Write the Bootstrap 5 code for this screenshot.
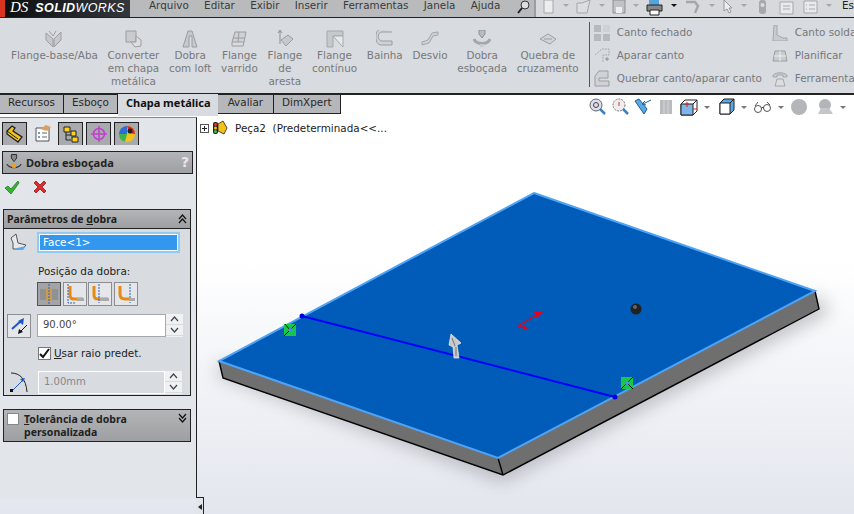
<!DOCTYPE html>
<html lang="pt">
<head>
<meta charset="UTF-8">
<title>SolidWorks - Dobra esboçada</title>
<link rel="stylesheet" href="https://cdn.jsdelivr.net/npm/bootstrap@5.3.3/dist/css/bootstrap.min.css">
<style>
html, body { height: 514px; overflow: hidden; }
body { width: 854px; font-family: "DejaVu Sans", sans-serif; font-size: 10.4px; line-height: 13px; color: #222; background: #fff; }
svg { display: block; flex: none; }
b, .bold-txt { font-family: "Noto Sans", sans-serif; font-weight: 700; font-size: 10.5px; }

.topbar { height: 18px; background: #b9babc; border-bottom: 1px solid #222; overflow: hidden; }
.brand { width: 130px; flex: none; height: 17px; background: linear-gradient(90deg, #0d0e10, #34373c); border-left: 5px solid #d8341e; color: #fff; font-style: italic; font-family: "Liberation Sans", sans-serif; font-size: 12.5px; line-height: 15px; padding-left: 5px; white-space: nowrap; }
.brand-ds { font-family: "Liberation Serif", serif; font-size: 15px; margin-right: 7px; }
.brand-solid { font-family: "Liberation Sans", sans-serif; font-size: 12.5px; letter-spacing: .4px; }
.brand-works { letter-spacing: .4px; }
.menus { width: 404px; flex: none; padding-left: 19px; color: #3a3a3a; line-height: 10px; }
.menu-item { margin-right: 15.3px; white-space: nowrap; }
.quick { flex: 1; height: 17px; background: #d7d9dc; border-left: 2px solid #9c9da0; padding-left: 2px; gap: 4px; }
.quick-txt { margin-left: 3px; line-height: 10px; white-space: nowrap; }
.tiny-caret { width: 0; height: 0; border: 3px solid transparent; border-top: 3px solid #a5a7aa; border-bottom: 0; margin: 0 3px; flex: none; }
.tiny-caret.dark { border-top-color: #111; }

.ribbon { height: 77px; background: #d8dbdf; border-bottom: 2px solid #222; color: #77797c; overflow: hidden; padding: 12px 0 0 11px; }
.rib-items { gap: 9.7px; }
.rib-item { text-align: center; white-space: nowrap; }
.rib-item svg { margin: 0 auto 1px; }
.rib-sep { width: 1px; height: 65px; background: #555; margin: -8px 4px 0 10px; flex: none; }
.rib-list { width: 178px; flex: none; margin-top: -9px; white-space: nowrap; }
.rib-list-row { height: 23px; gap: 7px; }

.work { height: 419px; background: linear-gradient(#fff 40%, #e3e6ee); }
.scene { position: absolute; left: 0; top: 0; }
.tabrow { height: 21px; position: relative; }
.cmd-tab { height: 19px; padding: 0 8px; background: #b5b7ba; border: 1px solid #222; border-top: 0; border-left: 0; line-height: 15px; color: #2a2a2a; white-space: nowrap; }
.cmd-tab.on { height: 22px; margin-top: -1px; background: #d8dbdf; border: 0; padding: 0 7px 0 8px; line-height: 17px; color: #111; font-size: 11px; }
.cmd-tab.wide { padding: 0 10px; }
.viewbar { margin-left: 246px; gap: 3px; height: 21px; padding-top: 3px; }
.viewbar .tiny-caret { margin: 0 3px 0 2px; border-top-color: #777; }

.pm { position: relative; width: 197px; height: 382px; margin-top: 1px; background: #e2e5e9; border-top: 1px solid #888; border-right: 1px solid #222; }
.pm-tabs { padding: 4px 0 0 2px; gap: 3px; height: 27px; }
.pm-tab { width: 25px; height: 23px; background: #a8aaad; border: 1px solid #222; border-bottom: 0; display: flex; align-items: center; justify-content: center; }
.pm-tab.on { background: #e2e5e9; border-color: #e2e5e9; height: 24px; margin-top: -1px; }
.pm-title { height: 23px; margin: 6px 3px 0 2px; background: linear-gradient(#b3b5b7, #9d9fa2); border: 1px solid #222; padding: 0 3px; }
.pm-title .bold-txt { font-size: 11px; }
.pm-help { margin-left: auto; color: #e8e8e8; font-size: 14px; font-weight: 700; }
.pm-ok { padding: 6px 0 0 4px; gap: 13px; height: 35px; }
.grp { margin: 0 5px 0 3px; border: 1px solid #222; }
.grp-head { height: 19px; background: linear-gradient(#b3b5b7, #9d9fa2); border-bottom: 1px solid #222; padding: 0 3px; color: #1d1d1d; }
.grp-body { height: 166px; background: #d8dbdf; position: relative; padding-top: 3px; }
.grp-row { gap: 6px; padding-left: 3px; }
.sel-box { width: 143px; height: 21px; border: 2px solid #8fcbf2; background: #fff; padding: 1px; }
.sel-box span { display: block; height: 15px; background: #3297ef; color: #fff; padding-left: 3px; line-height: 15px; }
.pos-lbl { padding: 12px 0 4px 34px; }
.pos-btns { padding-left: 33px; gap: 1.500px; }
.pos-btn { width: 24px; height: 24px; border: 1px solid #8c8e91; background: #e4e6e9; display: flex; align-items: center; justify-content: center; }
.pos-btn.on { background: #a2a4a7; border-color: #555; }
.num-box { width: 129px; height: 23px; border: 1px solid #a6a8ab; background: #fff; color: #444; padding-left: 5px; line-height: 19px; font-size: 10px; }
.num-box.off { background: #d8dbdf; border-color: #fff; color: #888; width: 127px; margin-left: 1px; }
.spin { width: 17px; height: 23px; background: #f0f1f2; flex: none; margin-left: -6px; }
.spin i { display: block; height: 11px; border-bottom: 1px solid #d8dbdf; color: #444; }
.chk-row { padding: 9px 0 11px 34px; gap: 3px; }
.chk-box { width: 13px; height: 13px; background: #fff; border: 1px solid #777; display: flex; align-items: center; justify-content: center; flex: none; }
.grp-two { margin-top: 13px; height: 33px; background: linear-gradient(#b3b5b7, #9d9fa2); border: 1px solid #222; padding: 3px 3px 0 3px; gap: 5px; }
.grp-two .bold-txt { display: block; line-height: 13px; }
.grp-two .chk-box { width: 12px; height: 12px; border-color: #888; }
.notch { position: absolute; left: 196px; top: 402px; width: 8px; height: 17px; background: #e2e5e9; border-top: 1px solid #222; border-right: 1px solid #222; color: #333; }
.notch-arrow { width: 0; height: 0; border: 3px solid transparent; border-right: 4px solid #222; border-left: 0; margin: 6px 0 0 2px; }
.tree-row { position: absolute; left: 200px; top: 25px; gap: 3px; color: #222; white-space: nowrap; }
.tree-plus { width: 9px; height: 9px; border: 1px solid #555; position: relative; }
.tree-plus::before { content: ""; position: absolute; left: 1px; right: 1px; top: 3px; height: 1px; background: #222; }
.tree-plus::after { content: ""; position: absolute; top: 1px; bottom: 1px; left: 3px; width: 1px; background: #222; }
</style>
</head>
<body>

<div class="topbar d-flex">
  <div class="brand"><span class="brand-ds">DS</span><b class="brand-solid">SOLID</b><span class="brand-works">WORKS</span></div>
  <div class="menus d-flex">
    <span class="menu-item">Arquivo</span><span class="menu-item">Editar</span><span class="menu-item">Exibir</span><span class="menu-item">Inserir</span><span class="menu-item">Ferramentas</span><span class="menu-item">Janela</span><span class="menu-item">Ajuda</span>
    <svg width="16" height="14" viewBox="0 0 16 14"><circle cx="9" cy="5" r="4" fill="#ddd" stroke="#333"/><path d="M6 8 2 13" stroke="#222" stroke-width="2"/></svg>
  </div>
  <div class="quick d-flex align-items-start">
    <svg width="14" height="14" class="ms-1" viewBox="0 0 14 14"><path d="M2 0h9v13H2z" fill="#eceded" stroke="#a5a7aa"/></svg><span class="tiny-caret mt-1"></span>
    <svg width="16" height="14" viewBox="0 0 16 14"><path d="M1 13V3h5l8-3-3 13z" fill="#dcdde0" stroke="#a5a7aa"/></svg><span class="tiny-caret mt-1"></span>
    <svg width="14" height="14" viewBox="0 0 14 14"><path d="M1 0h12v13H1z" fill="#c0c2c5" stroke="#8d8f92"/><path d="M4 7h6v6H4z" fill="#eee"/></svg><span class="tiny-caret mt-1"></span>
    <svg width="18" height="16" viewBox="0 0 18 16"><path d="M3 0h10v5H3z" fill="#57a4dc"/><path d="M1 5h15v6H1z" fill="#888" stroke="#222"/><path d="M4 10h9v5H4z" fill="#fff" stroke="#222"/></svg><span class="tiny-caret dark mt-1"></span>
    <svg width="18" height="14" viewBox="0 0 18 14"><path d="M2 2h9l3 4-3 7" fill="none" stroke="#a5a7aa" stroke-width="2.5"/></svg><span class="tiny-caret mt-1"></span>
    <svg width="12" height="14" viewBox="0 0 12 14"><path d="M2 0v11l3-2 2 4 2-1-2-4h3z" fill="#eceded" stroke="#96989b"/></svg><span class="tiny-caret mt-1"></span>
    <svg width="9" height="15" class="ms-1" viewBox="0 0 9 15"><rect x="1" width="7" height="14" rx="3" fill="#a6a8aa"/><circle cx="4.5" cy="5" r="2" fill="#ddd"/></svg>
    <svg width="16" height="15" class="ms-2" viewBox="0 0 16 15"><path d="M1 2h13v12H1z" fill="#e9eaec" stroke="#a5a7aa"/><path d="M4 6h7M4 9h7" stroke="#a5a7aa"/></svg>
    <svg width="16" height="15" class="ms-1" viewBox="0 0 16 15"><path d="M1 1h13v12H1z" fill="#e9eaec" stroke="#a5a7aa"/><path d="M6 5h6M6 9h6M3 5h1M3 9h1" stroke="#a5a7aa"/></svg><span class="tiny-caret mt-1"></span>
    <span class="quick-txt">Esboço</span>
  </div>
</div>

<div class="ribbon d-flex">
  <div class="rib-items d-flex">
    <div class="rib-item">
      <svg width="18" height="18" viewBox="0 0 18 18"><path d="M1 3l7 6v8L1 10zM9 9l7-7v8l-7 7z" fill="#c6c8cb" stroke="#9c9ea1"/><path d="M4 1l4 5 3-5" fill="none" stroke="#9c9ea1"/></svg>
      Flange-base/Aba
    </div>
    <div class="rib-item">
      <svg width="18" height="18" viewBox="0 0 18 18"><path d="M2 1h10v11H2z" fill="#c9cbce" stroke="#9c9ea1"/><path d="M12 6l5 4v6l-6 1-4-5h5z" fill="#dcdee0" stroke="#9c9ea1"/></svg>
      Converter<br>em chapa<br>metálica
    </div>
    <div class="rib-item">
      <svg width="18" height="18" viewBox="0 0 18 18"><path d="M7 1h4l5 16h-5V6H8v11H2z" fill="#c6c8cb" stroke="#9c9ea1"/></svg>
      Dobra<br>com loft
    </div>
    <div class="rib-item">
      <svg width="18" height="18" viewBox="0 0 18 18"><path d="M5 2h11l-2 10H2z" fill="#cfd1d4" stroke="#9c9ea1"/><path d="M9 2 8 12M3 8h12M2 12v4h11l1-4" fill="none" stroke="#9c9ea1"/></svg>
      Flange<br>varrido
    </div>
    <div class="rib-item">
      <svg width="18" height="18" viewBox="0 0 18 18"><path d="M4 0v14M2 3l2-3 2 3" fill="none" stroke="#8d8f92"/><path d="M5 10l7-5 5 4-7 7z" fill="#c6c8cb" stroke="#9c9ea1"/></svg>
      Flange<br>de<br>aresta
    </div>
    <div class="rib-item">
      <svg width="18" height="18" viewBox="0 0 18 18"><path d="M1 1h16v5H7v11H1z" fill="#c6c8cb" stroke="#a5a7aa"/><path d="M7 6l10 11V6z" fill="#e8e9eb" stroke="#a5a7aa"/></svg>
      Flange<br>contínuo
    </div>
    <div class="rib-item">
      <svg width="18" height="18" viewBox="0 0 18 18"><path d="M16 2H6C1 2 1 11 6 11h10v4H5c-7 0-7-16 0-16" fill="#cfd1d4" stroke="#9c9ea1"/></svg>
      Bainha
    </div>
    <div class="rib-item">
      <svg width="18" height="18" viewBox="0 0 18 18"><path d="M17 2l-6 1-4 7-6 2v3l7-2 4-7 5-1z" fill="#cfd1d4" stroke="#a5a7aa"/></svg>
      Desvio
    </div>
    <div class="rib-item">
      <svg width="18" height="18" viewBox="0 0 18 18"><path d="M6 0h6v4l-3 4-3-4z" fill="#b9bbbe" stroke="#8d8f92"/><path d="M1 9c2 6 14 6 16 0" fill="none" stroke="#a5a7aa" stroke-width="3"/><path d="M7 14h4v3H7z" fill="#c9cbce"/></svg>
      Dobra<br>esboçada
    </div>
    <div class="rib-item">
      <svg width="18" height="18" viewBox="0 0 18 18"><path d="M1 9l8-5 8 5-6 5z" fill="#d2d4d7" stroke="#9c9ea1"/><path d="M5 9h8" stroke="#9c9ea1"/></svg>
      Quebra de<br>cruzamento
    </div>
  </div>
  <div class="rib-sep"></div>
  <div class="rib-list">
    <div class="rib-list-row d-flex align-items-center">
      <svg width="16" height="16" viewBox="0 0 16 16"><path d="M0 0h7v7H0zM9 9h7v7H9zM0 9h7v7H0z" fill="#b7b9bc"/><path d="M9 0h7v7H9z" fill="#cfd1d4"/></svg>Canto fechado
    </div>
    <div class="rib-list-row d-flex align-items-center">
      <svg width="16" height="16" viewBox="0 0 16 16"><path d="M1 7l7-6h7v6H9v7" fill="#d8dadd" stroke="#a5a7aa" stroke-dasharray="2 1"/><path d="M11 11h4M13 9v4" stroke="#8d8f92"/></svg>Aparar canto
    </div>
    <div class="rib-list-row d-flex align-items-center">
      <svg width="16" height="17" viewBox="0 0 16 17"><path d="M1 6l4-5h9v7H5v3h10v5H1z" fill="#d0d2d5" stroke="#9c9ea1"/></svg>Quebrar canto/aparar canto
    </div>
  </div>
  <div class="rib-list">
    <div class="rib-list-row d-flex align-items-center">
      <svg width="16" height="16" viewBox="0 0 16 16"><path d="M2 0h3v10l6 3h4v3H1z" fill="#c9cbce" stroke="#a5a7aa"/></svg>Canto soldado
    </div>
    <div class="rib-list-row d-flex align-items-center">
      <svg width="16" height="16" viewBox="0 0 16 16"><path d="M3 3h10l2 10H1z" fill="#c9cbce" stroke="#9c9ea1"/><path d="M8 3v10M2 8h12" stroke="#eee"/></svg>Planificar
    </div>
    <div class="rib-list-row d-flex align-items-center">
      <svg width="16" height="16" viewBox="0 0 16 16"><path d="M1 4c4-3 10-3 14 0v2h-4V4H5v2H1z" fill="#c9cbce" stroke="#a5a7aa"/><path d="M5 8h6l2 7H3z" fill="#dcdee0" stroke="#a5a7aa"/></svg>Ferramenta de guia
    </div>
  </div>
</div>

<div class="work position-relative">
  <!-- scene uses page coordinates -->
  <svg class="scene" width="854" height="419" viewBox="0 95 854 419">
    <defs><filter id="soft" x="-20%" y="-20%" width="140%" height="140%"><feGaussianBlur stdDeviation="9"/></filter></defs>
    <path d="M215 375 503 482 830 312 819 296 503 460 223 362z" fill="#8e9097" opacity=".55" filter="url(#soft)"/>
    <path d="M219 361 223 378 503 475 819 309 815 291 498 458z" fill="#6f6f6f"/>
    <path d="M219 361 223 378 503 475 819 309 815 291M498 458 503 475" fill="none" stroke="#000" stroke-width="1.4"/>
    <path d="M534 193 815 291 498 458 219 361z" fill="#005cb8" stroke="#4fa3f5" stroke-width="2"/>
    <path d="M302 316 615 397" stroke="#0000ff" stroke-width="2"/>
    <circle cx="302" cy="316" r="2.5" fill="#0000e0"/><circle cx="615" cy="397" r="2.5" fill="#0000e0"/>
    <path d="M284 324h12v12h-12z" fill="#17c64a"/><path d="M284 336 296 324M285 324l5 6" stroke="#111"/><circle cx="290.500" cy="330" r="2" fill="#4a8df0"/>
    <path d="M621 377h12v12h-12z" fill="#17c64a"/><path d="M621 389 633 377M627 383l6 6" stroke="#111"/><circle cx="627" cy="383" r="2" fill="#4a8df0"/>
    <circle cx="636" cy="309" r="5.500" fill="#222"/><circle cx="635" cy="307" r="2" fill="#666"/>
    <path d="M518 326 540 313" stroke="#e8001a" stroke-width="1.400"/><path d="M544 311 534 312 537 318z" fill="#e8001a"/>
    <path d="M518 326 524 328" stroke="#e8001a"/><path d="M522 325 529 328 523 330z" fill="#e8001a"/>
    <path d="M451 334 461 343 457 345 459 358H454L453 347 449 345z" fill="#c9c9c9" stroke="#eee" stroke-width=".7"/>
    <path d="M452 338 455 346M456 347 456 356" stroke="#777"/>
  </svg>

  <div class="tabrow d-flex">
    <div class="cmd-tab">Recursos</div>
    <div class="cmd-tab">Esboço</div>
    <div class="cmd-tab on bold-txt">Chapa metálica</div>
    <div class="cmd-tab wide">Avaliar</div>
    <div class="cmd-tab">DimXpert</div>
    <div class="viewbar d-flex align-items-center">
      <svg width="20" height="18" viewBox="0 0 20 18"><circle cx="9" cy="7" r="6" fill="#dde" stroke="#666"/><circle cx="9" cy="7" r="2.500" fill="none" stroke="#444"/><path d="M13 11l5 5" stroke="#3d7fc0" stroke-width="2.500"/></svg>
      <svg width="20" height="18" viewBox="0 0 20 18"><circle cx="9" cy="7" r="6" fill="#eee" stroke="#777" stroke-dasharray="2 1"/><path d="M9 4v4" stroke="#c33"/><path d="M13 11l5 5" stroke="#3d7fc0" stroke-width="2.500"/></svg>
      <svg width="20" height="18" viewBox="0 0 20 18"><path d="M2 3l4-2 8 10-3 5z" fill="#58a9e6" stroke="#1f5f96"/><path d="M10 6l8-4M12 3l-3 3 4 1" fill="none" stroke="#1f5f96"/></svg>
      <svg width="20" height="18" viewBox="0 0 20 18"><path d="M4 2h12v14H4z" fill="#b9bbbe"/><path d="M8 2v14M12 2v14" stroke="#d6d7d9"/></svg>
      <svg width="20" height="18" viewBox="0 0 20 18"><path d="M2 6l4-4h12v11l-4 4H2z" fill="#fff" stroke="#222"/><path d="M2 6h12v11H2z" fill="#7fb6ea" stroke="#222"/><path d="M14 6l4-4" stroke="#222"/><path d="M8 4v5M6 6h4M14 11h4" stroke="#d22"/></svg>
      <span class="tiny-caret"></span>
      <svg width="20" height="18" viewBox="0 0 20 18"><path d="M4 5l4-4h10v11l-4 4H4z" fill="#57a9e8" stroke="#222"/><path d="M4 5h10v11H4z" fill="#fff" stroke="#222"/><path d="M14 5l4-4" stroke="#222"/></svg>
      <span class="tiny-caret"></span>
      <svg width="20" height="18" viewBox="0 0 20 18"><circle cx="5" cy="11" r="3.500" fill="#fff" stroke="#555"/><circle cx="14" cy="10" r="3.500" fill="#fff" stroke="#555"/><path d="M8 10l3-1M2 8l3-4M17 7l-3-3" fill="none" stroke="#555"/></svg>
      <span class="tiny-caret"></span>
      <svg width="18" height="18" viewBox="0 0 18 18"><circle cx="9" cy="9" r="8" fill="#b3b5b8"/></svg>
      <svg width="20" height="18" class="ms-1" viewBox="0 0 20 18"><circle cx="10" cy="7" r="6" fill="#b3b5b8"/><path d="M3 16l3-6h8l4 6z" fill="#c4c6c9"/></svg>
      <span class="tiny-caret"></span>
      <svg width="12" height="18" viewBox="0 0 12 18"><path d="M2 2h10v14H2z" fill="#d0d2d5"/></svg>
    </div>
  </div>

  <div class="tree-row d-flex align-items-center">
    <span class="tree-plus"></span>
    <svg width="16" height="16" viewBox="0 0 16 16"><rect x="1" y="2" width="5" height="12" rx="2" fill="#222"/><circle cx="3.500" cy="4.500" r="1.500" fill="#e33"/><circle cx="3.500" cy="8" r="1.500" fill="#fb0"/><circle cx="3.500" cy="11.500" r="1.500" fill="#3c3"/><path d="M6 4l5-3 4 7-3 6-6-3z" fill="#f2c21a" stroke="#222" stroke-width=".8"/></svg>
    <span class="ms-1">Peça2&nbsp; (Predeterminada&lt;&lt;...</span>
  </div>

  <div class="pm">
    <div class="pm-tabs d-flex">
      <div class="pm-tab"><svg width="20" height="18" viewBox="0 0 20 18"><path d="M2 6l5-5 3 2-2 3 9 6-4 5L2 9z" fill="#f2c21a" stroke="#222" stroke-width="1.300"/><path d="M2 6l11 8" stroke="#222"/></svg></div>
      <div class="pm-tab on"><svg width="18" height="17" viewBox="0 0 18 17"><path d="M2 3h13v13H2z" fill="#fff" stroke="#555"/><path d="M4 7h2v2H4zM4 11h2v2H4z" fill="#6b9cc9"/><path d="M8 8h5M8 12h5" stroke="#666"/><path d="M6 4l6-4 5 2-4 4z" fill="#d8a066"/></svg></div>
      <div class="pm-tab"><svg width="18" height="17" viewBox="0 0 18 17"><path d="M4 5v9h5M4 9h5" fill="none" stroke="#222"/><path d="M2 1h6v5H2zM9 5h5v5H9zM10 11h6v5h-6z" fill="#ffd21a" stroke="#222"/></svg></div>
      <div class="pm-tab"><svg width="18" height="18" viewBox="0 0 18 18"><circle cx="9" cy="9" r="5.500" fill="none" stroke="#c23ed0" stroke-width="1.500"/><path d="M9 1v16M1 9h16" stroke="#c23ed0" stroke-width="1.500"/></svg></div>
      <div class="pm-tab"><svg width="18" height="18" viewBox="0 0 18 18"><circle cx="9" cy="9" r="8" fill="#f2c21a"/><path d="M9 1a8 8 0 0 0-8 8h8z" fill="#2d6fd0"/><path d="M1 9a8 8 0 0 0 6 7.700L9 9z" fill="#3eb34a"/><path d="M9 1a8 8 0 0 1 8 8l-6-1z" fill="#d42a2a"/><circle cx="12" cy="6" r="2.500" fill="#222"/></svg></div>
    </div>
    <div class="pm-title d-flex align-items-center gap-1">
      <svg width="16" height="17" viewBox="0 0 18 18"><path d="M6 0h6v4l-3 4-3-4z" fill="#888" stroke="#222"/><path d="M1 11c3 5 13 5 16 0" fill="none" stroke="#333" stroke-width="1.500"/><circle cx="9" cy="13" r="2.500" fill="#f0a020"/></svg>
      <span class="bold-txt">Dobra esboçada</span><span class="pm-help">?</span>
    </div>
    <div class="pm-ok d-flex">
      <svg width="16" height="15" viewBox="0 0 16 15"><path d="M1 8l3-2 3 3 7-8 1 2-8 11z" fill="#35b52f" stroke="#1b6d18" stroke-width=".7"/></svg>
      <svg width="14" height="14" viewBox="0 0 14 14"><path d="M1 3l2-2 4 4 4-4 2 2-4 4 4 4-2 2-4-4-4 4-2-2 4-4z" fill="#de2b2b" stroke="#8c1010" stroke-width=".7"/></svg>
    </div>
    <div class="grp">
      <div class="grp-head d-flex align-items-center justify-content-between">
        <span class="bold-txt">Parâmetros de <u>d</u>obra</span>
        <svg width="9" height="10" viewBox="0 0 9 10"><path d="M1 5l3.500-4L8 5M1 9l3.500-4L8 9" fill="none" stroke="#111" stroke-width="1.200"/></svg>
      </div>
      <div class="grp-body">
        <div class="grp-row d-flex align-items-center">
          <svg width="24" height="20" viewBox="0 0 24 20"><path d="M6 10 4 5l5-4 2 9 8 2-4 4H6z" fill="#e8e9eb" stroke="#555"/><path d="M10 15l9-2-3 4H8z" fill="#5ea6e6"/></svg>
          <div class="sel-box"><span>Face&lt;1&gt;</span></div>
        </div>
        <div class="pos-lbl">Posição da dobra:</div>
        <div class="pos-btns d-flex">
          <div class="pos-btn on"><svg width="20" height="20" viewBox="0 0 20 20"><path d="M1 5h18v11H1z" fill="#8f9194"/><path d="M7 4h6v13H7z" fill="#c99c55"/><path d="M10 0v20" stroke="#2b5fc0" stroke-dasharray="2 1"/></svg></div>
          <div class="pos-btn"><svg width="20" height="20" viewBox="0 0 20 20"><path d="M5 2v9q0 4 4 4h9" fill="none" stroke="#e78a10" stroke-width="3"/><path d="M3 0v19h8" fill="none" stroke="#2b5fc0" stroke-dasharray="2 1"/><path d="M12 14h7v3h-7z" fill="#aaa"/></svg></div>
          <div class="pos-btn"><svg width="20" height="20" viewBox="0 0 20 20"><path d="M4 2v9q0 4 4 4h10" fill="none" stroke="#e78a10" stroke-width="3"/><path d="M9 0v19" stroke="#2b5fc0" stroke-dasharray="2 1"/><path d="M10 14h9v3h-9z" fill="#aaa"/></svg></div>
          <div class="pos-btn"><svg width="20" height="20" viewBox="0 0 20 20"><path d="M4 2v8q0 5 5 5h4" fill="none" stroke="#e78a10" stroke-width="3"/><path d="M14 0v19" stroke="#2b5fc0" stroke-dasharray="2 1"/><path d="M13 14h6v3h-6z" fill="#aaa"/></svg></div>
        </div>
        <div class="grp-row d-flex mt-2">
          <div class="pos-btn"><svg width="20" height="20" viewBox="0 0 20 20"><path d="M3 13 13 4" stroke="#1f57c9" stroke-width="2"/><path d="M15 2l-1 7-5-4z" fill="#1f57c9"/><path d="M18 9 11 16" stroke="#111"/><path d="M9 18l1-5 4 3z" fill="#111"/></svg></div>
          <div class="num-box">90.00°</div>
          <div class="spin text-center"><i><svg class="mx-auto" width="9" height="10" viewBox="0 0 9 10"><path d="M1 7l3.500-4L8 7" fill="none" stroke="#444" stroke-width="1.200"/></svg></i><i><svg class="mx-auto" width="9" height="10" viewBox="0 0 9 10"><path d="M1 3l3.500 4L8 3" fill="none" stroke="#444" stroke-width="1.200"/></svg></i></div>
        </div>
        <div class="chk-row d-flex align-items-center">
          <span class="chk-box"><svg width="11" height="11" viewBox="0 0 11 11"><path d="M1 6l3 3 6-8" fill="none" stroke="#111" stroke-width="2"/></svg></span>
          <span><u>U</u>sar raio predet.</span>
        </div>
        <div class="grp-row d-flex">
          <svg width="24" height="23" viewBox="0 0 24 23"><path d="M4 2c9 0 15 6 16 19" fill="none" stroke="#222"/><path d="M5 20 16 9" stroke="#1f57c9"/><path d="M18 7l-5 1 3 3z" fill="#1f57c9"/><path d="M3 18h3v3H3z" fill="#111"/></svg>
          <div class="num-box off">1.00mm</div>
          <div class="spin text-center"><i><svg class="mx-auto" width="9" height="10" viewBox="0 0 9 10"><path d="M1 7l3.500-4L8 7" fill="none" stroke="#444" stroke-width="1.200"/></svg></i><i><svg class="mx-auto" width="9" height="10" viewBox="0 0 9 10"><path d="M1 3l3.500 4L8 3" fill="none" stroke="#444" stroke-width="1.200"/></svg></i></div>
        </div>
      </div>
    </div>
    <div class="grp grp-two d-flex">
      <span class="chk-box"></span>
      <span class="flex-grow-1 bold-txt"><u>T</u>olerância de dobra<br>personalizada</span>
      <svg width="9" height="10" viewBox="0 0 9 10"><path d="M1 1l3.500 4L8 1M1 5l3.500 4L8 5" fill="none" stroke="#111" stroke-width="1.200"/></svg>
    </div>
  </div>
  <div class="notch"><div class="notch-arrow"></div></div>
</div>

<script src="https://cdn.jsdelivr.net/npm/bootstrap@5.3.3/dist/js/bootstrap.bundle.min.js"></script>
</body>
</html>
